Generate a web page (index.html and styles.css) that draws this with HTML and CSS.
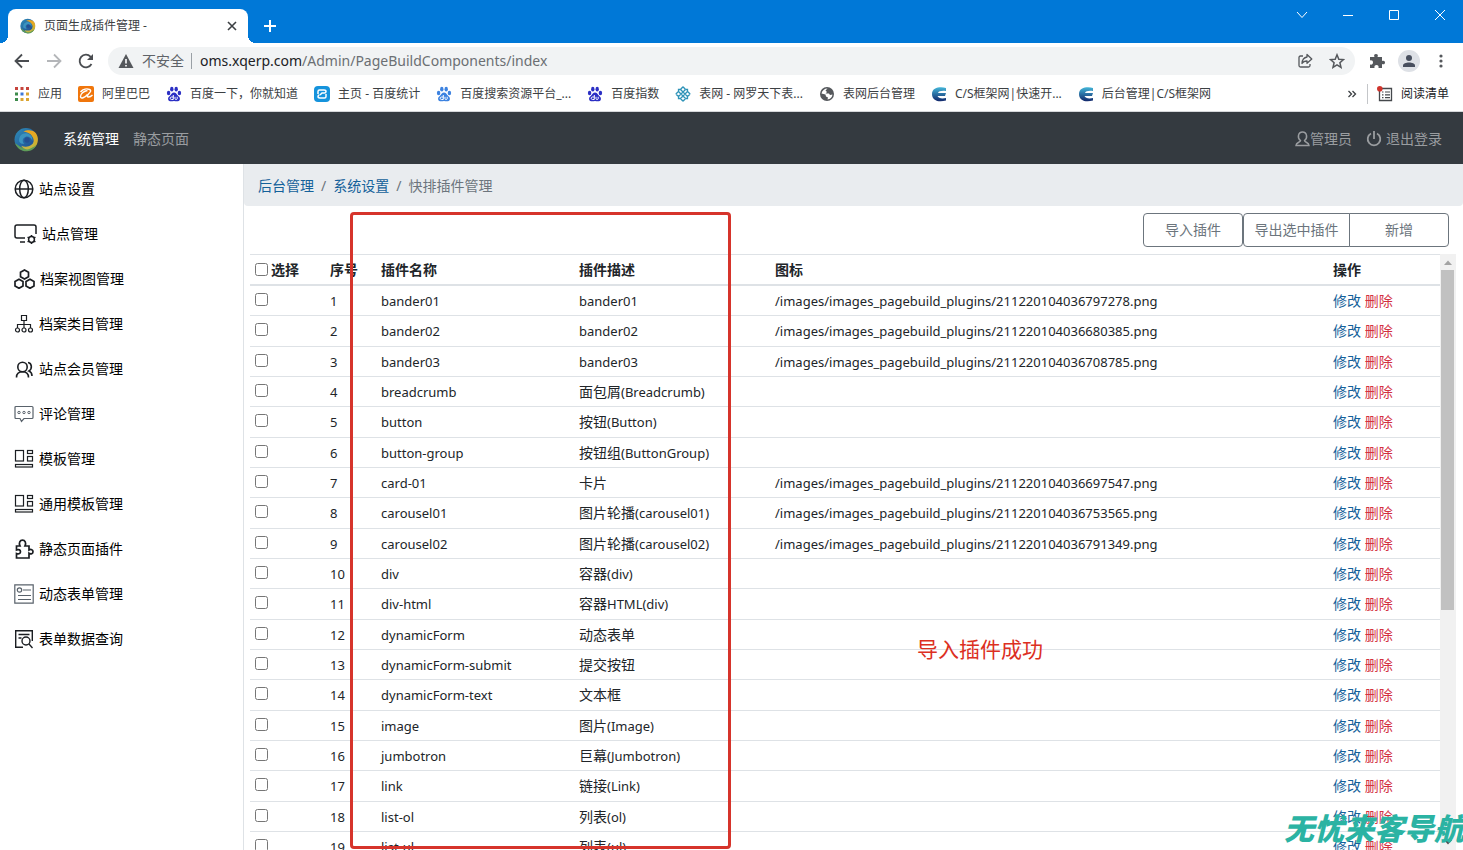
FILE: index.html
```html
<!DOCTYPE html>
<html lang="zh-CN">
<head>
<meta charset="utf-8">
<title>页面生成插件管理 -</title>
<link rel="stylesheet" href="styles.css">
</head>
<body>
<svg class="defs" width="0" height="0" aria-hidden="true">
  <defs>
    <linearGradient id="swirlBlue" x1="0" y1="0" x2="1" y2="1"><stop offset="0" stop-color="#2f8fb8"/><stop offset="1" stop-color="#1c3f8c"/></linearGradient>
    <linearGradient id="swirlGold" x1="0" y1="0" x2="0" y2="1"><stop offset="0" stop-color="#f0a51e"/><stop offset="1" stop-color="#b9b53a"/></linearGradient>
    <linearGradient id="csBlue" x1="0" y1="0" x2="0" y2="1"><stop offset="0" stop-color="#43b5d8"/><stop offset="1" stop-color="#12276b"/></linearGradient>
    <symbol id="swirl" viewBox="0 0 24 24">
      <circle cx="11.500" cy="12" r="11" fill="url(#swirlBlue)"/>
      <path d="M9 4.500C13 2 19 3 21 6c3 4 2.500 10-1 13.500-2 2-5 3-8 3 5-2 8-7 6.500-11.500C17 6.500 13 4.500 9 4.500z" fill="url(#swirlGold)"/>
      <path d="M1 15.500c2 5 6.500 8 11.500 7.700 4-.2 7.500-2.500 9-6-3 2.500-6 3.300-9.500 3.300-5 0-7.500-3-11-5z" fill="#5f9c58"/>
      <path d="M7 18c5 2 11 .5 12.500-5 .5 5-3 8.500-7 8.500-2.500 0-4.500-1.500-5.500-3.500z" fill="#c4b544"/>
      <path d="M5 14C4 9 8 5.500 12 6c4 .4 6.500 4 5.500 7.500C16.500 10 13.500 8.500 11 9.500c-3 1-3.500 4.500-1 6.500-2 .5-4 0-5-2z" fill="#3b93bf"/>
      <circle cx="12.500" cy="12.500" r="2.600" fill="#234f93"/>
    </symbol>
    <symbol id="paw" viewBox="0 0 16 16">
      <ellipse cx="2.600" cy="7" rx="1.700" ry="2.200"/><ellipse cx="5.800" cy="3.200" rx="1.700" ry="2.400"/><ellipse cx="10.200" cy="3.200" rx="1.700" ry="2.400"/><ellipse cx="13.400" cy="7" rx="1.700" ry="2.200"/>
      <path d="M8 6.500c2 0 2.600 1.700 3.800 3 1.400 1.300 2.600 2.300 2 4.200-.6 1.700-2.300 1.800-5.800 1.400-3.500.4-5.200.3-5.800-1.400-.6-1.900.6-2.900 2-4.200 1.200-1.300 1.800-3 3.800-3z"/>
      <path d="M7.300 9v4.500H5.500c-1.800 0-1.800-2.500 0-2.500h1.800M9 10.800v2c0 .9 2.200.9 2.200 0v-2" fill="none" stroke="#fff"/>
    </symbol>
    <symbol id="cs" viewBox="0 0 16 16">
      <path d="M15 2C10 .5 1 1 1 8s7 8.500 14 6.500V12c-4 .8-7.500.5-8.500-2H14l1-3H7c.5-2 4-2.500 8-2z" fill="url(#csBlue)"/>
    </symbol>
    <symbol id="blocks" viewBox="0 0 20 20">
      <rect x="1.500" y="1.500" width="8" height="10.500"/><rect x="13.500" y="1.500" width="5" height="3"/><rect x="13.500" y="7.500" width="5" height="4.500"/><rect x="1.500" y="15.500" width="17" height="2.500"/>
    </symbol>
  </defs>
</svg>

<header class="browser">
  <div class="tabstrip">
    <div class="tab">
      <svg class="i16"><use href="#swirl"/></svg>
      <span class="tab-title">页面生成插件管理 -</span>
      <button class="bare" aria-label="关闭标签页"><svg width="10" height="10" viewBox="0 0 10 10" fill="none" stroke="#3c4043" stroke-width="1.600"><path d="M1 1l8 8M9 1l-8 8"/></svg></button>
    </div>
    <button class="bare newtab" aria-label="新标签页"><svg width="14" height="14" viewBox="0 0 14 14" fill="none" stroke="#fff" stroke-width="2"><path d="M7 1v12M1 7h12"/></svg></button>
    <div class="window-buttons">
      <button class="bare" aria-label="搜索标签页"><svg width="12" height="12" viewBox="0 0 12 12"><path d="M1 3l5 5.500L11 3"/></svg></button>
      <button class="bare" aria-label="最小化"><svg width="12" height="12" viewBox="0 0 12 12"><path d="M1 6.500h10"/></svg></button>
      <button class="bare" aria-label="最大化"><svg width="12" height="12" viewBox="0 0 12 12"><path d="M1.500 1.500h9v9h-9z"/></svg></button>
      <button class="bare" aria-label="关闭"><svg width="12" height="12" viewBox="0 0 12 12"><path d="M1 1l10 10M11 1L1 11"/></svg></button>
    </div>
  </div>
  <div class="toolbar">
    <button class="bare" aria-label="后退"><svg class="i16" viewBox="0 0 16 16" fill="none" stroke="#4a4d51" stroke-width="1.800"><path d="M15 8H2M8 1.500L1.500 8 8 14.500"/></svg></button>
    <button class="bare" aria-label="前进"><svg class="i16" viewBox="0 0 16 16" fill="none" stroke="#b4b6b9" stroke-width="1.800"><path d="M1 8h13M8 1.500L14.500 8 8 14.500"/></svg></button>
    <button class="bare" aria-label="刷新"><svg class="i16" viewBox="0 0 16 16" fill="none" stroke="#4a4d51" stroke-width="1.800"><path d="M13.500 11A6.300 6.300 0 1 1 12.500 3.600L14 5"/><path d="M15 1v6H9z" fill="#4a4d51" stroke="none"/></svg></button>
    <div class="omnibox">
      <svg class="i16" viewBox="0 0 16 16"><path d="M8 1l7.500 14H.5z" fill="#55585c"/><path d="M8 6v4.500M8 12v1.500" stroke="#fff" stroke-width="1.600"/></svg>
      <span class="unsafe">不安全</span>
      <span class="url"><b>oms.xqerp.com</b>/Admin/PageBuildComponents/index</span>
      <button class="bare" aria-label="分享"><svg class="i16" viewBox="0 0 16 16" fill="none" stroke="#55585c" stroke-width="1.300" stroke-linejoin="round"><path d="M6 3H3.500Q2 3 2 4.500v8Q2 14 3.500 14h8q1.500 0 1.500-1.500V11"/><path d="M10 1.500L14.800 6 10 10.300V8c-2.500 0-4 .8-5 2.500C5.200 7 7 4.500 10 4z"/></svg></button>
      <button class="bare" aria-label="收藏"><svg class="i16" viewBox="0 0 16 16" fill="none" stroke="#55585c" stroke-width="1.500"><path d="M8 1.800l1.800 4.400 4.700.4-3.600 3.100 1.100 4.600L8 11.800l-4 2.500 1.100-4.600L1.500 6.600l4.700-.4z"/></svg></button>
    </div>
    <button class="bare" aria-label="扩展程序"><svg class="i16" viewBox="0 0 16 16" fill="#55585c"><path d="M1 4h4.500C4.500 2 5.500 1 7 1s2.500 1 1.500 3H13v4c2-.8 3 .3 3 1.500S15 12 13 11v4H9.500c.5-2-.5-3-2-3s-2.500 1-2 3H1v-3.500c2 .5 3-.5 3-2s-1-2.500-3-2z"/></svg></button>
    <button class="bare" aria-label="用户"><svg width="22" height="22" viewBox="0 0 22 22"><circle cx="11" cy="11" r="11" fill="#dee1e6"/><g fill="#484f5e"><circle cx="11" cy="8" r="3"/><path d="M5 17v-1.500c0-4 12-4 12 0V17z"/></g></svg></button>
    <button class="bare" aria-label="菜单"><svg class="i16" viewBox="0 0 16 16" fill="#55585c"><circle cx="8" cy="3" r="1.600"/><circle cx="8" cy="8" r="1.600"/><circle cx="8" cy="13" r="1.600"/></svg></button>
  </div>
  <nav class="bookmarks">
    <a href="#"><svg class="i16" viewBox="0 0 16 16"><g fill="#c6443c"><path d="M1 1h3v3H1zM6.500 1h3v3h-3zM12 1h3v3h-3z"/></g><path d="M1 6.500h3v3H1zM1 12h3v3H1z" fill="#3d8b4c"/><path d="M6.500 6.500h3v3h-3z" fill="#3d78d8"/><path d="M12 6.500h3v3h-3zM6.500 12h3v3h-3zM12 12h3v3h-3z" fill="#dba532"/></svg>应用</a>
    <a href="#"><svg class="i16" viewBox="0 0 16 16"><rect width="16" height="16" rx="2" fill="#f0760c"/><path d="M2.500 6C5 3 9 2.500 11.500 3.500c2.500 1 .5 3-1 4.500-1.500 1.700-1.500 3 0 3 1.500 0 3-1 4-2M9.500 4.500C5.500 5 2.500 8 2.500 10.500c0 3 4.500 1 7-2" fill="none" stroke="#fff" stroke-width="1.400"/></svg>阿里巴巴</a>
    <a href="#"><svg class="i16" fill="#2b2fc4"><use href="#paw"/></svg>百度一下，你就知道</a>
    <a href="#"><svg class="i16" viewBox="0 0 16 16"><rect width="16" height="16" rx="4" fill="#1593dc"/><g fill="none" stroke="#fff" stroke-width="1.500"><path d="M4 8V5.500Q4 4 5.500 4H10q2 0 2 1.500T10.500 7H8L6 9"/><path d="M12 8v2.500q0 1.500-1.500 1.500H6q-2 0-2-1.500T5.500 9"/></g></svg>主页 - 百度统计</a>
    <a href="#"><svg class="i16" fill="#3c82e0"><use href="#paw"/></svg>百度搜索资源平台_...</a>
    <a href="#"><svg class="i16" fill="#2b2fc4"><use href="#paw"/></svg>百度指数</a>
    <a href="#"><svg class="i16" viewBox="0 0 16 16" fill="none" stroke="#2e93b8" stroke-width="1.300"><path d="M5.500 3.500l7 7M3.500 5.500l7 7M10.500 3.500l-7 7M12.500 5.500l-7 7M8 .8l2.500 2.700M8 .8L5.500 3.500M.8 8l2.700-2.500M.8 8l2.700 2.500M15.200 8l-2.700-2.500M15.200 8l-2.700 2.500M8 15.200l-2.500-2.700M8 15.200l2.500-2.700M5.500 3.500H3.500v2M10.500 3.500h2v2M3.500 10.500v2h2M12.500 10.500v2h-2"/></svg>表网 - 网罗天下表...</a>
    <a href="#"><svg class="i16" viewBox="0 0 16 16"><circle cx="8" cy="8" r="7" fill="#55585c"/><path d="M8.500 2.500L6.500 4.500 8 6 6.500 7.500H10l1 1.500 2.500-.5c-.3 2.800-2.300 4.800-5 5l.5-2-2-1-.5-2L2.500 7.500C3 4.500 5.500 2.500 8.500 2.500z" fill="#fff"/></svg>表网后台管理</a>
    <a href="#"><svg class="i16"><use href="#cs"/></svg>C/S框架网|快速开...</a>
    <a href="#"><svg class="i16"><use href="#cs"/></svg>后台管理|C/S框架网</a>
    <button class="bare more" aria-label="更多书签"><svg width="10" height="10" viewBox="0 0 10 10" fill="none" stroke="#3c4043" stroke-width="1.300"><path d="M1.500 2l3 3-3 3M5.500 2l3 3-3 3"/></svg></button>
    <a class="reading" href="#"><svg class="i16" viewBox="0 0 16 16"><path d="M2.500 3v11.500h12v-12H4" fill="none" stroke="#45484c" stroke-width="1.300"/><path d="M5 6h1.500M8 6h5M5 8.800h1.500M8 8.800h5M5 11.600h1.500M8 11.600h5" stroke="#45484c" stroke-width="1.200"/><circle cx="2.800" cy="2.800" r="2.800" fill="#d0342c"/></svg>阅读清单</a>
  </nav>
</header>

<nav class="topnav">
  <svg class="logo"><use href="#swirl"/></svg>
  <a class="active" href="#">系统管理</a>
  <a href="#">静态页面</a>
  <a class="right" href="#"><svg width="15" height="16" viewBox="0 0 15 16" fill="none" stroke="#9a9da0" stroke-width="1.500"><path d="M5.500 9.500C2 7 3 1 7.500 1S13 7 9.500 9.500c0 2 4.500 1.500 4.500 5H1c0-3.500 4.500-3 4.500-5z"/></svg>管理员</a>
  <a class="logout" href="#"><svg class="i16" viewBox="0 0 16 16" fill="none" stroke="#9a9da0" stroke-width="1.800"><path d="M5 2.500a6.300 6.300 0 1 0 6 0M8 0v8"/></svg>退出登录</a>
</nav>

<div class="layout">
  <aside class="sidebar">
    <a href="#"><svg class="i20" viewBox="0 0 20 20" stroke-width="1.500"><circle cx="10" cy="10" r="8.800"/><ellipse cx="10" cy="10" rx="4.300" ry="8.800"/><path d="M1 10h18"/></svg>站点设置</a>
    <a href="#"><svg width="23" height="20" viewBox="0 0 23 20" stroke-width="1.500"><path d="M11 14H3q-2 0-2-2V3q0-2 2-2h17q2 0 2 2v7M6 18h5"/><circle cx="17.500" cy="15.500" r="2.900"/><path d="M17.500 11v1.600M17.500 18.400V20M13.600 13.200l1.400.8M20 17l1.400.8M13.600 17.800L15 17M20 14l1.400-.8"/></svg>站点管理</a>
    <a href="#"><svg width="21" height="20" viewBox="0 0 21 20" stroke-width="1.700"><path d="M10.500 1l4 2.300v4.500l-4 2.300-4-2.300V3.300zM5 10.300l4 2.300v4.400l-4 2.300-4-2.300v-4.400zM16 10.300l4 2.300v4.400l-4 2.300-4-2.300v-4.400z"/></svg>档案视图管理</a>
    <a href="#"><svg class="i20" viewBox="0 0 20 20" stroke-width="1.200"><path d="M7.500 1.500h5v5h-5zM10 6.500V14M3.500 14v-3.500h13V14"/><circle cx="3.500" cy="16" r="2"/><circle cx="10" cy="16" r="2"/><circle cx="16.500" cy="16" r="2"/></svg>档案类目管理</a>
    <a href="#"><svg class="i20" viewBox="0 0 20 20" stroke-width="1.600"><circle cx="8.500" cy="8" r="4.700"/><path d="M2.500 18.500c0-3.500 2-5.700 6-5.700s6 2.200 6 5.700M14 3.500c4 .5 4.500 6.500 1 8.500 2 .8 3 2.500 3 5"/></svg>站点会员管理</a>
    <a href="#"><svg class="i20 slate" viewBox="0 0 20 20" stroke-width="1.200"><path d="M2 2.500h16q1 0 1 1v10q0 1-1 1h-8L7.500 17.500 6 14.500H2q-1 0-1-1v-10q0-1 1-1z"/><g stroke-width="1"><circle cx="5" cy="8.500" r="1.200"/><circle cx="10" cy="8.500" r="1.200"/><circle cx="15" cy="8.500" r="1.200"/></g></svg>评论管理</a>
    <a href="#"><svg class="i20" stroke-width="1.200"><use href="#blocks"/></svg>模板管理</a>
    <a href="#"><svg class="i20" stroke-width="1.200"><use href="#blocks"/></svg>通用模板管理</a>
    <a href="#"><svg class="i20" viewBox="0 0 20 20" stroke-width="1.700"><path d="M2.500 7H6C4.500 4 6 1.200 8.500 1.200S12.500 4 11 7h4v4c2-1.200 4-.2 4 1.700s-2 2.800-4 1.600V19H2.500v-4.500c2.500 1 4-.2 4-1.800s-1.500-2.700-4-1.700z"/></svg>静态页面插件</a>
    <a href="#"><svg class="i20 slate" viewBox="0 0 20 20" stroke-width="1.200"><path d="M.8.800h18.400v18.400H.8zM9 6h8M4 11.500h13M4 15.500h13"/><circle cx="5.500" cy="6" r="2.200"/></svg>动态表单管理</a>
    <a href="#"><svg class="i20" viewBox="0 0 20 20" stroke-width="1.400"><path d="M9 18.300H1.700V1.700h16.600V12M4.500 5.500h11M4.500 9h3"/><circle cx="12" cy="12" r="4"/><path d="M15 15l3.500 4"/></svg>表单数据查询</a>
  </aside>

  <main class="content">
    <nav class="breadcrumb"><a href="#">后台管理</a><span>/</span><a href="#">系统设置</a><span>/</span><span>快排插件管理</span></nav>
    <div class="actions">
      <button>导入插件</button><button class="wide">导出选中插件</button><button class="last">新增</button>
    </div>
    <div class="table-area">
      <div class="table-clip">
      <table>
        <colgroup><col class="c-check"><col class="c-no"><col class="c-name"><col class="c-desc"><col><col class="c-op"></colgroup>
        <thead><tr><th><label><input type="checkbox">选择</label></th><th>序号</th><th>插件名称</th><th>插件描述</th><th>图标</th><th>操作</th></tr></thead>
        <tbody>
          <tr><td><input type="checkbox" aria-label="选择 1"></td><td class="en">1</td><td class="en">bander01</td><td class="en">bander01</td><td class="en">/images/images_pagebuild_plugins/211220104036797278.png</td><td><a href="#">修改</a> <a class="del" href="#">删除</a></td></tr>
          <tr><td><input type="checkbox" aria-label="选择 2"></td><td class="en">2</td><td class="en">bander02</td><td class="en">bander02</td><td class="en">/images/images_pagebuild_plugins/211220104036680385.png</td><td><a href="#">修改</a> <a class="del" href="#">删除</a></td></tr>
          <tr><td><input type="checkbox" aria-label="选择 3"></td><td class="en">3</td><td class="en">bander03</td><td class="en">bander03</td><td class="en">/images/images_pagebuild_plugins/211220104036708785.png</td><td><a href="#">修改</a> <a class="del" href="#">删除</a></td></tr>
          <tr><td><input type="checkbox" aria-label="选择 4"></td><td class="en">4</td><td class="en">breadcrumb</td><td>面包屑<span class="en">(Breadcrumb)</span></td><td></td><td><a href="#">修改</a> <a class="del" href="#">删除</a></td></tr>
          <tr><td><input type="checkbox" aria-label="选择 5"></td><td class="en">5</td><td class="en">button</td><td>按钮<span class="en">(Button)</span></td><td></td><td><a href="#">修改</a> <a class="del" href="#">删除</a></td></tr>
          <tr><td><input type="checkbox" aria-label="选择 6"></td><td class="en">6</td><td class="en">button-group</td><td>按钮组<span class="en">(ButtonGroup)</span></td><td></td><td><a href="#">修改</a> <a class="del" href="#">删除</a></td></tr>
          <tr><td><input type="checkbox" aria-label="选择 7"></td><td class="en">7</td><td class="en">card-01</td><td>卡片</td><td class="en">/images/images_pagebuild_plugins/211220104036697547.png</td><td><a href="#">修改</a> <a class="del" href="#">删除</a></td></tr>
          <tr><td><input type="checkbox" aria-label="选择 8"></td><td class="en">8</td><td class="en">carousel01</td><td>图片轮播<span class="en">(carousel01)</span></td><td class="en">/images/images_pagebuild_plugins/211220104036753565.png</td><td><a href="#">修改</a> <a class="del" href="#">删除</a></td></tr>
          <tr><td><input type="checkbox" aria-label="选择 9"></td><td class="en">9</td><td class="en">carousel02</td><td>图片轮播<span class="en">(carousel02)</span></td><td class="en">/images/images_pagebuild_plugins/211220104036791349.png</td><td><a href="#">修改</a> <a class="del" href="#">删除</a></td></tr>
          <tr><td><input type="checkbox" aria-label="选择 10"></td><td class="en">10</td><td class="en">div</td><td>容器<span class="en">(div)</span></td><td></td><td><a href="#">修改</a> <a class="del" href="#">删除</a></td></tr>
          <tr><td><input type="checkbox" aria-label="选择 11"></td><td class="en">11</td><td class="en">div-html</td><td>容器<span class="en">HTML(div)</span></td><td></td><td><a href="#">修改</a> <a class="del" href="#">删除</a></td></tr>
          <tr><td><input type="checkbox" aria-label="选择 12"></td><td class="en">12</td><td class="en">dynamicForm</td><td>动态表单</td><td></td><td><a href="#">修改</a> <a class="del" href="#">删除</a></td></tr>
          <tr><td><input type="checkbox" aria-label="选择 13"></td><td class="en">13</td><td class="en">dynamicForm-submit</td><td>提交按钮</td><td></td><td><a href="#">修改</a> <a class="del" href="#">删除</a></td></tr>
          <tr><td><input type="checkbox" aria-label="选择 14"></td><td class="en">14</td><td class="en">dynamicForm-text</td><td>文本框</td><td></td><td><a href="#">修改</a> <a class="del" href="#">删除</a></td></tr>
          <tr><td><input type="checkbox" aria-label="选择 15"></td><td class="en">15</td><td class="en">image</td><td>图片<span class="en">(Image)</span></td><td></td><td><a href="#">修改</a> <a class="del" href="#">删除</a></td></tr>
          <tr><td><input type="checkbox" aria-label="选择 16"></td><td class="en">16</td><td class="en">jumbotron</td><td>巨幕<span class="en">(Jumbotron)</span></td><td></td><td><a href="#">修改</a> <a class="del" href="#">删除</a></td></tr>
          <tr><td><input type="checkbox" aria-label="选择 17"></td><td class="en">17</td><td class="en">link</td><td>链接<span class="en">(Link)</span></td><td></td><td><a href="#">修改</a> <a class="del" href="#">删除</a></td></tr>
          <tr><td><input type="checkbox" aria-label="选择 18"></td><td class="en">18</td><td class="en">list-ol</td><td>列表<span class="en">(ol)</span></td><td></td><td><a href="#">修改</a> <a class="del" href="#">删除</a></td></tr>
          <tr><td><input type="checkbox" aria-label="选择 19"></td><td class="en">19</td><td class="en">list-ul</td><td>列表<span class="en">(ul)</span></td><td></td><td><a href="#">修改</a> <a class="del" href="#">删除</a></td></tr>
        </tbody>
      </table>
      </div>
      <div class="scrollbar">
        <svg width="16" height="16" viewBox="0 0 16 16"><path d="M4 11l4-4.500 4 4.500z" fill="#a3a3a3"/></svg>
        <div class="thumb"></div>
        <svg class="down" width="16" height="16" viewBox="0 0 16 16"><path d="M4 6l4 4.500L12 6z" fill="#505050"/></svg>
      </div>
    </div>
    <div class="mark-box"></div>
    <div class="mark-text">导入插件成功</div>
    <div class="watermark">无忧来客导航</div>
  </main>
</div>
</body>
</html>
```
FILE: styles.css
```css
* { box-sizing: border-box; }
body {
  margin: 0;
  height: 100vh;
  overflow: hidden;
  display: flex;
  flex-direction: column;
  background: #fff;
  color: #212529;
  font: 14px/20px "Noto Sans", "Noto Sans CJK SC", sans-serif;
}
a { color: inherit; text-decoration: none; }
svg { flex: none; display: block; }
.defs { position: absolute; }
.i16 { width: 16px; height: 16px; }
.i20 { width: 20px; height: 20px; }
.bare { border: 0; padding: 0; background: none; display: flex; align-items: center; justify-content: center; }

/* Browser frame */
.tabstrip { height: 43px; padding: 9px 0 0 8px; background: #0078d7; display: flex; align-items: stretch; }
.tab {
  position: relative;
  width: 240px;
  padding: 0 11px 0 12px;
  display: flex;
  align-items: center;
  gap: 8px;
  background: #fff;
  border-radius: 8px 8px 0 0;
  font-size: 12px;
  color: #3c4043;
}
.tab::before, .tab::after { content: ""; position: absolute; bottom: 0; width: 8px; height: 8px; }
.tab::before { left: -8px; background: radial-gradient(circle at 0 0, transparent 8px, #fff 8px); }
.tab::after { right: -8px; background: radial-gradient(circle at 100% 0, transparent 8px, #fff 8px); }
.tab-title { flex: 1; }
.newtab { margin-left: 15px; }
.window-buttons { margin-left: auto; height: 12px; display: flex; gap: 34px; padding-right: 17px; }
.window-buttons svg { fill: none; stroke: #fff; stroke-width: 1; }

.toolbar { height: 36px; padding: 0 14px; display: flex; align-items: center; gap: 16px; }
.toolbar > .bare:last-child { margin-left: -3px; }
.toolbar > .bare:nth-last-child(2) { margin-left: -3px; }
.omnibox {
  flex: 1;
  height: 28px;
  margin: 0 -2px;
  padding: 0 10px;
  display: flex;
  align-items: center;
  gap: 8px;
  background: #f1f3f4;
  border-radius: 14px;
}
.unsafe { color: #5f6368; border-right: 1px solid #9aa0a6; padding-right: 7px; line-height: 16px; }
.url { flex: 1; color: #6b6f73; }
.url b { font-weight: 400; color: #202124; }
.omnibox .bare + .bare { margin-left: 8px; }

.bookmarks { height: 33px; padding: 0 14px 2px; display: flex; align-items: center; gap: 16px; border-bottom: 1px solid #d5d7da; font-size: 12px; color: #3c4043; white-space: nowrap; }
.bookmarks a { display: flex; align-items: center; gap: 8px; }
.more { margin-left: auto; margin-right: -6px; }
.reading { border-left: 1px solid #c4c6c9; padding-left: 9px; color: #202124; }

/* Site header */
.topnav { height: 52px; padding: 2px 21px 0 14px; display: flex; align-items: center; gap: 14px; background: #343a40; color: #9a9da0; }
.topnav .logo { width: 25px; height: 25px; margin-right: 10px; }
.topnav a { display: flex; align-items: center; }
.topnav .active { color: #fff; }
.topnav .right { margin-left: auto; }
.topnav .logout { gap: 4px; }

.layout { flex: 1; min-height: 0; display: flex; }
.sidebar { width: 244px; flex: none; padding: 2px 14px; border-right: 1px solid #dee2e6; color: #000; }
.sidebar a { height: 45px; display: flex; align-items: center; gap: 5px; }
.sidebar svg { fill: none; stroke: #1b1e22; }
.sidebar .slate { stroke: #59626b; }

.content { flex: 1; min-width: 0; position: relative; overflow: hidden; display: flex; flex-direction: column; }
.breadcrumb { height: 42px; flex: none; padding: 2px 14px 0; display: flex; align-items: center; gap: 7px; background: #e9ecef; border-radius: 0 0 4px 4px; color: #6c757d; }
.breadcrumb a { color: #14619a; }

.actions { display: flex; justify-content: flex-end; padding: 7px 14px; }
.actions button { width: 100px; height: 34px; padding: 0; border: 1px solid #6c757d; border-radius: 4px; background: #fff; color: #6c757d; font: inherit; }
.actions .wide { width: 107px; border-radius: 4px 0 0 4px; }
.actions .last { margin-left: -1px; border-radius: 0 4px 4px 0; }

.table-area { flex: 1; min-height: 0; display: flex; padding: 0 7px 0 6px; }
.table-clip { flex: 1; min-width: 0; overflow: hidden; }
table { width: 100%; table-layout: fixed; border-collapse: separate; border-spacing: 0; }
.c-check { width: 75px; }
.c-no { width: 51px; }
.c-name { width: 198px; }
.c-desc { width: 196px; }
.c-op { width: 112px; }
th, td { height: 30px; padding: 0 5px; border-bottom: 1px solid #dee2e6; text-align: left; vertical-align: middle; white-space: nowrap; }
th { height: 32px; border-top: 1px solid #dee2e6; border-bottom-width: 2px; font-weight: 700; }
tr:nth-child(3n+2) td { height: 31px; }
label { display: flex; align-items: center; gap: 3px; }
input { width: 13px; height: 13px; margin: 0; }
td input { display: block; margin-bottom: 3px; }
.en { font-size: 13px; }
td a { color: #14619a; }
td .del { color: #d3313f; }

.scrollbar { width: 16px; flex: none; display: flex; flex-direction: column; background: #f1f1f1; }
.thumb { height: 50%; margin: 0 2px 0 1px; background: #c1c1c1; flex-grow: 1; max-height: 340px; }
.down { margin-top: auto; }

/* Annotations laid over the page */
.mark-box { position: absolute; left: 106px; top: 48px; bottom: 1px; width: 381px; border: 3px solid #d6342b; border-radius: 4px; }
.mark-text { position: absolute; left: 673px; top: 470px; font-size: 21px; line-height: 30px; color: #dc2f22; }
.watermark { position: absolute; left: 1040px; bottom: 4px; font-size: 30px; line-height: 34px; font-weight: 900; font-style: italic; color: #2bb3a3; white-space: nowrap; }
```
